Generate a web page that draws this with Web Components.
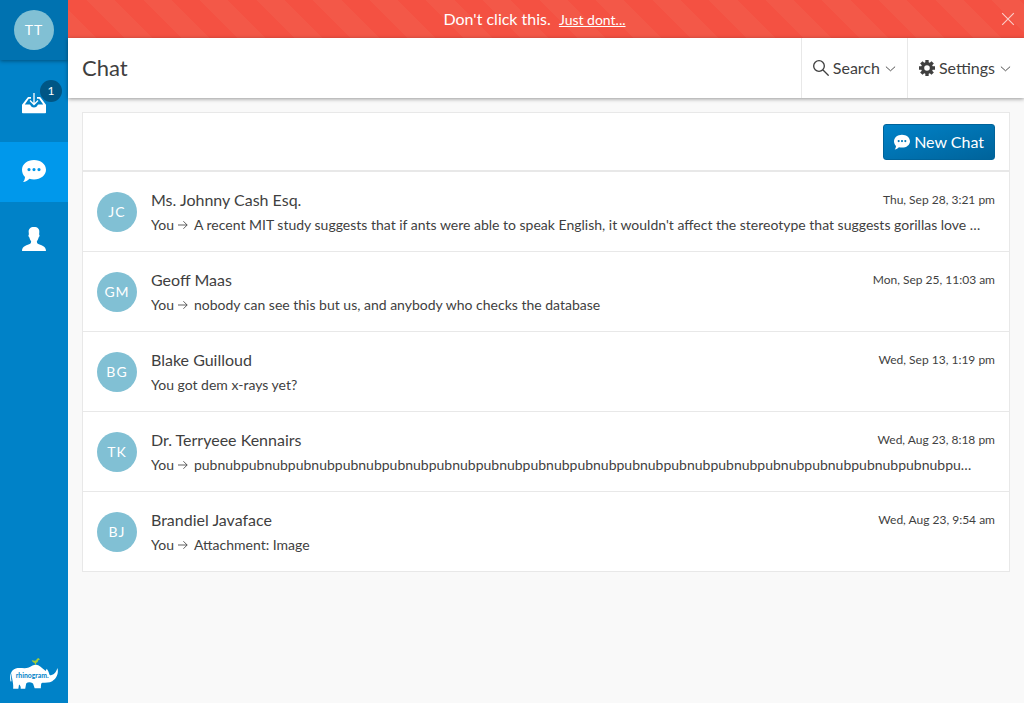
<!DOCTYPE html>
<html lang="en">
<head>
<meta charset="utf-8">
<meta name="viewport" content="width=device-width, initial-scale=1">
<title>Chat</title>
<style>
  body { margin: 0; font-family: Lato, "Liberation Sans", sans-serif; color: #3f3f3f; background: #f9f9f9; }
</style>
</head>
<body>
<chat-app></chat-app>
<script>
const icons = {
  inbox: '<path fill="currentColor" d="M6 6h3v1.800H6.800L2.800 13.500h4.700c.6 0 .8.400 1.100 1 .6 1.200 1.700 2 3.400 2s2.800-.8 3.400-2c.3-.6.5-1 1.100-1h4.700L17.200 7.800H15V6h3.200L24 13.800V21.500a.8.8 0 0 1-.8.800H.8a.8.8 0 0 1-.8-.8V13.800z"/><path fill="none" stroke="currentColor" stroke-width="1.300" d="M12 2v11M8 9.500l4 4 4-4"/>',
  chat: '<path fill="currentColor" fill-rule="evenodd" d="M12 1c6.600 0 12 4.200 12 9.700s-5.400 9.700-12 9.700c-1.600 0-3.200-.2-4.600-.7-1.700 1.800-3.800 3-6.300 3.400 1-1.400 1.800-3 1.900-5.200C1.100 16 0 13.500 0 10.700 0 5.200 5.400 1 12 1zM7 9a1.600 1.600 0 1 0 0 3.200A1.600 1.600 0 0 0 7 9zm5 0a1.600 1.600 0 1 0 0 3.200A1.600 1.600 0 0 0 12 9zm5 0a1.600 1.600 0 1 0 0 3.200A1.600 1.600 0 0 0 17 9z"/>',
  person: '<path fill="currentColor" d="M12 0c3.800 0 5.600 2 5.300 5.200l-.2 2.200c.8.300.5 2.400-.5 3-.3 1.600-.9 2.700-1.700 3.600 0 1.500.2 2.300.9 2.700C18.500 18.200 24 18.600 24 24H0c0-5.400 5.500-5.800 8.200-7.300.7-.4.900-1.200.9-2.700-.8-.9-1.400-2-1.700-3.600-1-.6-1.300-2.700-.5-3l-.2-2.200C6.400 2 8.200 0 12 0z"/>',
  search: '<path fill="none" stroke="currentColor" stroke-width="2" d="M17 9a8 8 0 1 1-16 0 8 8 0 0 1 16 0zM15 15l8.500 8.500"/>',
  gear: '<path fill="currentColor" fill-rule="evenodd" d="M9.500 0h5v3.500l1.700.7 2.500-2.500 3.600 3.600-2.500 2.500.7 1.700H24v5h-3.500l-.7 1.700 2.500 2.500-3.600 3.600-2.500-2.500-1.700.7V24h-5v-3.500l-1.700-.7-2.500 2.500-3.600-3.600 2.500-2.500-.7-1.700H0v-5h3.500l.7-1.700-2.500-2.500 3.600-3.600 2.500 2.500 1.700-.7zM12 7.800a4.200 4.200 0 1 0 0 8.400 4.200 4.200 0 0 0 0-8.400z"/>',
  down: '<path fill="none" stroke="currentColor" stroke-width="2" d="M2 8l10 9 10-9"/>',
  arrow: '<path fill="none" stroke="currentColor" stroke-width="2" d="M0 12h22M13 3l9 9-9 9"/>',
  close: '<path fill="none" stroke="currentColor" stroke-width="2" d="M2 2l20 20M22 2L2 22"/>'
};

class Base extends HTMLElement {
  render(html) {
    const t = document.createElement('template');
    t.innerHTML = '<style>*{box-sizing:border-box}' + this.constructor.css + '</style>' + html;
    this.attachShadow({ mode: 'open' }).append(t.content.cloneNode(true));
  }
}

customElements.define('ui-icon', class extends Base {
  static css = ':host{display:inline-block;width:24px;height:24px;flex:none}svg{display:block;width:100%;height:100%}';
  connectedCallback() {
    this.render(`<svg viewBox="0 0 24 24" aria-hidden="true">${icons[this.getAttribute('name')]}</svg>`);
  }
});

customElements.define('user-avatar', class extends Base {
  static css = `:host{display:flex;align-items:center;justify-content:center;flex:none;width:40px;height:40px;border-radius:50%;
    background:#81c0d4;color:#fff;font-size:14px;line-height:20px;letter-spacing:1px}`;
  connectedCallback() { this.render('<slot></slot>'); }
});

customElements.define('brand-logo', class extends Base {
  static css = ':host{display:block;width:56px;height:38px}svg{display:block}text{font:700 21px Lato,sans-serif;fill:#0082c8}';
  connectedCallback() {
    this.render(`<svg width="56" height="38" viewBox="-2 0 172 114" role="img" aria-label="rhinogram">
      <path fill="#fff" d="M12 83C8 66 13 47 28 43c12-4 28 2 40-3 9-4 14-8 22-8 10 0 18 10 30 19l3-7c5 5 7 13 9 19 7 3 14-3 18-8 3-4 4-7 6-13 5 16-4 34-16 40-9 5-20 4-30 5-5 1-4 5-5 17H86l-5-15c-8-5-16-5-21 0l-3 16H43c1-6-1-10-5-13l-2 13H20c1-10-1-20-3-30-2-9-1-14 0-19-4 8-4 16-2 26z"/>
      <path fill="#a4cd39" d="M77 18c7 2 11 2 14 0 1-4 4-6 8-6l3 4-5 2c-1 6-4 8-7 8l1 6h-4l-1-6c-5-1-7-4-9-8z"/>
      <text x="28" y="71">rhinogram.</text></svg>`);
  }
});

customElements.define('side-bar', class extends Base {
  static css = `:host{display:flex;flex-direction:column;background:#0082c8;color:#fff}
    .me{display:flex;justify-content:center;padding:10px 0;background:#0072b0;box-shadow:0 1px 4px rgba(0,0,0,.4)}
    nav{display:grid;gap:8px;padding-top:14px}
    a{position:relative;display:grid;place-items:center;height:60px;padding-bottom:2px;color:#fff;text-decoration:none}
    a.on{background:#0098eb}
    .badge{position:absolute;top:6px;right:6px;width:22px;height:22px;border-radius:50%;background:#005685;
      font-size:12px;line-height:22px;text-align:center}
    brand-logo{margin:auto auto 11px}`;
  connectedCallback() {
    this.render(`<div class="me"><user-avatar>TT</user-avatar></div>
      <nav><a href="#inbox" aria-label="Inbox"><ui-icon name="inbox"></ui-icon><span class="badge">1</span></a>
      <a class="on" href="#chat" aria-label="Chat"><ui-icon name="chat"></ui-icon></a>
      <a href="#contacts" aria-label="Contacts"><ui-icon name="person"></ui-icon></a></nav>
      <brand-logo></brand-logo>`);
  }
});

customElements.define('alert-banner', class extends Base {
  static css = `:host{display:flex;align-items:center;height:38px;color:#fff;
      background:repeating-linear-gradient(45deg,#f35848,#f35848 20px,#f45142 20px,#f45142 40px)}
    p{flex:1;margin:0;font-size:16px;line-height:20px;text-align:center}
    a{color:#fff;font-size:14px;margin-left:4px}
    button{margin-right:9px;padding:0;border:0;background:none;color:#fff;opacity:.7;line-height:0}
    ui-icon{width:14px;height:14px}`;
  connectedCallback() {
    this.render(`<p><slot></slot> <a href="#dont">Just dont...</a></p>
      <button type="button" aria-label="Close"><ui-icon name="close"></ui-icon></button>`);
  }
});

customElements.define('page-header', class extends Base {
  static css = `:host{display:flex;position:relative;height:60px;background:#fff;box-shadow:0 1px 4px rgba(0,0,0,.4)}
    h1{flex:1;margin:0;padding-left:14px;font-size:22px;line-height:60px;font-weight:400}
    button{display:flex;align-items:center;gap:4px;padding:0 11px;border:0;border-left:1px solid #e8e8e8;background:none;
      font:16px/20px Lato,sans-serif;color:inherit}
    button:last-child{padding-right:13px}
    ui-icon{width:16px;height:16px}
    .down{width:11px;height:11px;margin-left:1px}`;
  connectedCallback() {
    this.render(`<h1><slot></slot></h1>
      <button type="button"><ui-icon name="search"></ui-icon>Search<ui-icon class="down" name="down"></ui-icon></button>
      <button type="button"><ui-icon name="gear"></ui-icon>Settings<ui-icon class="down" name="down"></ui-icon></button>`);
  }
});

customElements.define('chat-row', class extends Base {
  static css = `:host{display:flex;align-items:center;gap:14px;height:80px;padding:0 14px;border-bottom:1px solid #e8e8e8}
    .body{flex:1;min-width:0;padding-top:2px}
    .top{display:flex;justify-content:space-between}
    h2{margin:0;font-size:16px;line-height:24px;font-weight:400}
    time{font-size:12px;line-height:24px}
    p{margin:0;font-size:14px;line-height:26px;white-space:nowrap;overflow:hidden;text-overflow:ellipsis}
    ui-icon{width:10px;height:10px;margin:0 6px 0 4px}`;
  connectedCallback() {
    const a = n => this.getAttribute(n);
    this.render(`<user-avatar>${a('initials')}</user-avatar>
      <div class="body"><div class="top"><h2>${a('name')}</h2><time>${a('time')}</time></div>
      <p>${this.hasAttribute('sent') ? 'You<ui-icon name="arrow"></ui-icon>' : ''}<slot></slot></p></div>`);
  }
});

customElements.define('chat-list', class extends Base {
  static css = `:host{display:block;margin:14px;border:1px solid #e8e8e8;border-bottom:0;background:#fff}
    .bar{display:flex;justify-content:flex-end;padding:11px 14px 10px;border-bottom:2px solid #e8e8e8}
    button{display:flex;align-items:center;gap:4px;height:36px;padding:0 10px;border:1px solid #00639a;border-radius:3px;
      background:linear-gradient(to bottom right,#0082c8,#00639a);color:#fff;font:16px/20px Lato,sans-serif}
    ui-icon{width:16px;height:16px}`;
  connectedCallback() {
    this.render(`<div class="bar"><button type="button"><ui-icon name="chat"></ui-icon>New Chat</button></div><slot></slot>`);
  }
});

customElements.define('chat-app', class extends Base {
  static css = `:host{display:grid;grid-template-columns:68px minmax(0,1fr);min-height:100vh}`;
  connectedCallback() {
    this.render(`<side-bar></side-bar>
      <main><alert-banner>Don't click this.</alert-banner><page-header>Chat</page-header>
      <chat-list>
        <chat-row sent initials="JC" name="Ms. Johnny Cash Esq." time="Thu, Sep 28, 3:21 pm">A recent MIT study suggests that if ants were able to speak English, it wouldn't affect the stereotype that suggests gorillas love …</chat-row>
        <chat-row sent initials="GM" name="Geoff Maas" time="Mon, Sep 25, 11:03 am">nobody can see this but us, and anybody who checks the database</chat-row>
        <chat-row initials="BG" name="Blake Guilloud" time="Wed, Sep 13, 1:19 pm">You got dem x-rays yet?</chat-row>
        <chat-row sent initials="TK" name="Dr. Terryeee Kennairs" time="Wed, Aug 23, 8:18 pm">${'pubnub'.repeat(16)}pu…</chat-row>
        <chat-row sent initials="BJ" name="Brandiel Javaface" time="Wed, Aug 23, 9:54 am">Attachment: Image</chat-row>
      </chat-list></main>`);
  }
});
</script>
</body>
</html>
